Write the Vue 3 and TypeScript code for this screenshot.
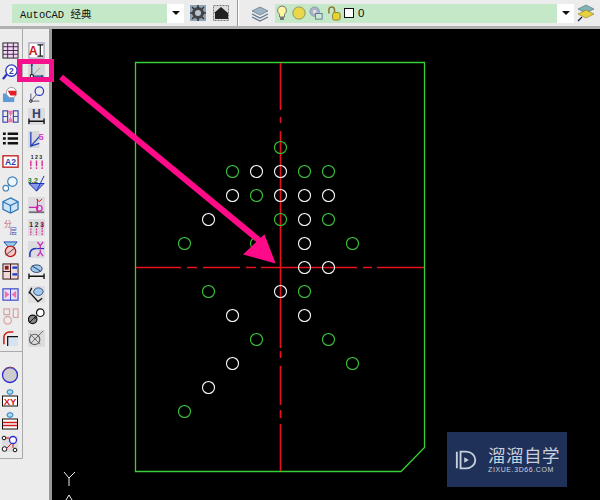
<script setup lang="ts">
type Hole = [number, number, number]
const rows: [number, [number, number][]][] = [
  [147, [[280, 1]]],
  [171, [[232, 1], [256, 0], [280, 0], [304, 1], [328, 1]]],
  [195, [[232, 0], [256, 1], [280, 0], [304, 0], [328, 0]]],
  [219, [[208, 0], [280, 1], [304, 0], [328, 1]]],
  [243, [[184, 1], [256, 1], [304, 0], [352, 1]]],
  [267, [[304, 0], [328, 0]]],
  [291, [[208, 1], [280, 0], [304, 1]]],
  [315, [[232, 0], [304, 0]]],
  [339, [[256, 1], [328, 1]]],
  [363, [[232, 0], [352, 1]]],
  [387, [[208, 0]]],
  [411, [[184, 1]]],
]
const holes: Hole[] = rows.flatMap(([y, items]) => items.map(([x, g]) => [x, y, g] as Hole))
</script>

<template>
  <div class="app">
    <header class="topbar">
      <div class="grip"></div>
      <div class="combo workspace">
        <span class="combo-value">AutoCAD 经典</span>
        <span class="combo-drop"><i class="caret"></i></span>
      </div>
      <svg class="tb" viewBox="0 0 18 18">
        <rect x="1" y="1" width="16" height="16" fill="#8fa4b8" />
        <circle cx="9" cy="9" r="6" fill="#444" />
        <circle cx="9" cy="9" r="3" fill="#b8c4d0" />
        <path d="M9 1v3M9 14v3M1 9h3M14 9h3M3 3l2 2M13 13l2 2M15 3l-2 2M5 13l-2 2" stroke="#333" stroke-width="1.5" />
      </svg>
      <svg class="tb" viewBox="0 0 18 18">
        <rect x="1.5" y="1.5" width="15" height="15" fill="#ddd" stroke="#777" stroke-dasharray="2 1" />
        <path d="M2 9 9 3l7 6v6H3V9z" fill="#222" />
      </svg>
      <div class="sep"></div>
      <svg class="tb layers" viewBox="0 0 20 18">
        <path d="M10 3 18 7l-8 4-8-4z" fill="#9db4c6" stroke="#5d7185" stroke-width=".7" />
        <path d="M2 10l8 4 8-4M2 13l8 4 8-4" fill="none" stroke="#62788c" stroke-width="1.3" />
      </svg>
      <div class="combo layer">
        <svg class="lamp" viewBox="0 0 12 16">
          <path d="M6 1a4.5 4.5 0 0 0-2.5 8.2V12h5V9.2A4.5 4.5 0 0 0 6 1z" fill="#fff6a0" stroke="#777" />
          <rect x="4" y="12" width="4" height="3" fill="#777" />
        </svg>
        <svg class="sun" viewBox="0 0 16 16"><circle cx="8" cy="8" r="7" fill="#e8d84a" stroke="#8a8a50" /></svg>
        <svg class="freeze" viewBox="0 0 16 16">
          <circle cx="6" cy="6" r="5" fill="#aab4c4" stroke="#8896aa" />
          <circle cx="6" cy="6" r="2" fill="#dde" />
          <rect x="7" y="8" width="7" height="6" fill="#cde8d0" stroke="#5a7a9a" />
        </svg>
        <svg class="lock" viewBox="0 0 16 16">
          <path d="M2 8V4a3 3 0 0 1 6 0v3" fill="none" stroke="#8a7a30" stroke-width="1.6" />
          <rect x="6" y="7" width="8" height="8" rx="2" fill="#e8d430" stroke="#8a7a30" />
        </svg>
        <i class="swatch"></i>
        <span class="layer-name">0</span>
        <span class="combo-drop"><i class="caret"></i></span>
      </div>
      <svg class="tb stack" viewBox="0 0 18 18">
        <path d="M9 1 17 5l-8 4-8-4z" fill="#7fb4b4" stroke="#567" stroke-width=".6" />
        <path d="M9 6l8 4-8 4-8-4z" fill="#e8d040" stroke="#897a20" stroke-width=".6" />
        <path d="M1 17l4-4" stroke="#124" stroke-width="1.3" />
      </svg>
      <div class="grip-end"></div>
    </header>

    <main class="workarea">
      <aside class="side">
        <section class="upper">
          <div class="col">
            <svg class="ic" viewBox="0 0 18 18">
              <rect x="1" y="1" width="16" height="16" fill="#f0d8f0" stroke="#222" />
              <path d="M1 5h16M1 9h16M1 13h16M6 1v16M12 1v16" stroke="#402050" />
            </svg>
            <svg class="ic" viewBox="0 0 18 18">
              <circle cx="10" cy="7" r="6" fill="#fff" stroke="#2233bb" stroke-width="1.4" />
              <text x="10" y="10.5" class="tx" font-size="9" fill="#3040b0">2</text>
              <path d="M5 11 1 16" stroke="#2233bb" stroke-width="2.4" />
            </svg>
            <svg class="ic" viewBox="0 0 18 18">
              <rect x="1" y="8" width="12" height="9" fill="#5c9bd8" />
              <circle cx="10" cy="7" r="5.5" fill="#fff" stroke="#999" />
              <path d="M6 5h9v5H9z" fill="#e81c24" />
            </svg>
            <svg class="ic" viewBox="0 0 18 18">
              <rect x="1" y="3" width="5" height="12" fill="none" stroke="#3344aa" stroke-width="1.2" />
              <path d="M1 9h5" stroke="#3344aa" />
              <rect x="12" y="3" width="5" height="12" fill="none" stroke="#3344aa" stroke-width="1.2" />
              <path d="M12 9h5" stroke="#3344aa" />
              <path d="M6 3h6L9 9l3 6H6l3-6z" fill="#f078b0" />
            </svg>
            <svg class="ic" viewBox="0 0 18 18">
              <path d="M1 3h3M1 8h3M1 13h3M6 3h11M6 8h11M6 13h11" stroke="#111" stroke-width="2.6" />
            </svg>
            <svg class="ic" viewBox="0 0 18 18">
              <rect x="1" y="3" width="16" height="12" fill="#fff" stroke="#c01818" stroke-width="1.4" />
              <text x="9" y="12.5" class="tx" font-size="9" fill="#2a3fa8">A2</text>
            </svg>
            <svg class="ic" viewBox="0 0 18 18">
              <circle cx="11" cy="7" r="5" fill="#eef4fa" stroke="#3f7fb8" stroke-width="1.2" />
              <circle cx="4" cy="14" r="3" fill="#fff" stroke="#3f7fb8" stroke-width="1.2" />
              <path d="M6.5 11.5 8 10" stroke="#3f7fb8" />
            </svg>
            <svg class="ic" viewBox="0 0 18 18">
              <path d="M9 1 17 5v8l-8 4-8-4V5z" fill="#cfe4f4" stroke="#2f78b8" stroke-width="1.4" />
              <path d="M1 5l8 4 8-4M9 9v8" fill="none" stroke="#2f78b8" stroke-width="1.4" />
            </svg>
            <svg class="ic" viewBox="0 0 18 18">
              <text x="6" y="8.500" class="tx cjk" font-size="8" fill="#c06080">分</text>
              <text x="12" y="16" class="tx cjk" font-size="8" fill="#3a55b0">层</text>
            </svg>
            <svg class="ic" viewBox="0 0 18 18">
              <path d="M2 1h14L9 9z" fill="#8fd0e8" stroke="#2040b0" />
              <circle cx="9" cy="11" r="5.5" fill="#f4c8c8" stroke="#c01818" stroke-width="1.4" />
              <path d="M4 15 14 7" stroke="#444" />
            </svg>
            <svg class="ic" viewBox="0 0 18 18">
              <rect x="1" y="1" width="16" height="16" fill="#eed8d8" stroke="#301010" />
              <path d="M9 1v16M1 9h8" stroke="#301010" />
              <path d="M11 5h5M11 12h5" stroke="#1040d0" stroke-width="2.4" />
              <rect x="3" y="3" width="4" height="4" fill="#901818" />
            </svg>
            <svg class="ic" viewBox="0 0 18 18">
              <rect x="1" y="3" width="16" height="12" fill="#e8e0f4" stroke="#3344cc" stroke-width="1.2" />
              <path d="M3 5l5 4-5 4zM15 5l-5 4 5 4z" fill="#f070b0" />
              <path d="M9 3v12" stroke="#3344cc" />
            </svg>
            <svg class="ic" viewBox="0 0 18 18">
              <rect x="2" y="1" width="6" height="6" fill="none" stroke="#d8a8a8" stroke-width="1.4" />
              <rect x="12" y="1" width="5" height="9" fill="none" stroke="#d8a8a8" stroke-width="1.4" />
              <circle cx="6" cy="13" r="4" fill="none" stroke="#d8a8a8" stroke-width="1.4" />
            </svg>
            <svg class="ic" viewBox="0 0 18 18">
              <path d="M2 15V8a6 6 0 0 1 6-6h4" fill="none" stroke="#d01818" stroke-width="1.6" />
              <rect x="6" y="7" width="11" height="10" fill="#d4e4f0" />
              <path d="M6 17V7h11" fill="none" stroke="#111" stroke-width="1.3" />
            </svg>
          </div>
          <div class="col second">
            <svg class="ic" viewBox="0 0 18 18">
              <rect x="1" y="1" width="16" height="16" fill="#fff" stroke="#88a" />
              <text x="5.5" y="14" class="tx" font-size="13" fill="#c81818">A</text>
              <path d="M10 3h6M13 3v12M10 15h6" stroke="#111" stroke-width="1.2" fill="none" />
            </svg>
            <svg class="ic selected" viewBox="0 0 18 18">
              <path d="M4 15V2M4 15H16" stroke="#184a88" stroke-width="1.3" />
              <path d="M2.500 4 4 1l1.500 3zM14 13.500l3 1.500-3 1.500z" fill="#184a88" />
              <path d="M4 15 13 6" stroke="#8aa" />
              <rect x="2.500" y="13.500" width="3" height="3" fill="#fff" stroke="#111" />
            </svg>
            <svg class="ic" viewBox="0 0 18 18">
              <circle cx="12" cy="5.500" r="4.500" fill="none" stroke="#2a35c8" stroke-width="1.3" />
              <path d="M3 16V8M3 16h9M3 16 9 9" stroke="#557" />
              <circle cx="3" cy="16" r="1.300" fill="#fff" stroke="#111" />
            </svg>
            <svg class="ic" viewBox="0 0 18 18">
              <rect x="0" y="0" width="18" height="18" fill="#dcdce0" />
              <text x="9" y="11" class="tx" font-size="13" font-weight="400" fill="#30406a">H</text>
              <path d="M1 11v6M17 11v6M1 14h16" stroke="#111" stroke-width="1.4" />
            </svg>
            <svg class="ic" viewBox="0 0 18 18">
              <rect x="0" y="0" width="12" height="18" fill="#d8d8dc" />
              <path d="M3 1v16M3 16 12 6M3 16l9-3" stroke="#2244bb" stroke-width="1.4" />
              <text x="14" y="10" class="tx" font-size="10" font-weight="400" fill="#d040c0">5</text>
            </svg>
            <svg class="ic" viewBox="0 0 18 18">
              <text x="9" y="6" class="tx" font-size="5.500" fill="#222">1 2 3</text>
              <path d="M3 8v9M9 8v9M15 8v9" stroke="#d83090" stroke-width="1.500" stroke-dasharray="6 1" />
            </svg>
            <svg class="ic" viewBox="0 0 18 18">
              <text x="5" y="8" class="tx" font-size="8" fill="#208040">3.2</text>
              <path d="M1 9h16L9 17z" fill="#8898e8" stroke="#1a2ab0" />
              <path d="M17 1 9 17" stroke="#1a2ab0" />
            </svg>
            <svg class="ic" viewBox="0 0 18 18">
              <rect x="0" y="0" width="18" height="18" fill="#dcdce0" />
              <path d="M10 2v14M1 11h10" stroke="#d020b0" stroke-width="1.200" />
              <path d="M1 16h16" stroke="#222" />
              <circle cx="12" cy="12" r="3" fill="none" stroke="#d020b0" stroke-width="1.300" />
              <path d="M9 2l3 3 3-3" fill="none" stroke="#e01818" />
            </svg>
            <svg class="ic" viewBox="0 0 18 18">
              <rect x="0" y="0" width="18" height="18" fill="#dcdce0" />
              <text x="9" y="8" class="tx" font-size="7" fill="#222">1 2 3</text>
              <path d="M3 10v7M9 10v7M15 3v14" stroke="#d83090" stroke-width="1.300" stroke-dasharray="2 1" />
            </svg>
            <svg class="ic" viewBox="0 0 18 18">
              <rect x="0" y="0" width="18" height="18" fill="#dcdce0" />
              <path d="M2 17V13Q3 8 9 8" fill="none" stroke="#2233bb" stroke-width="1.600" />
              <path d="M9 8h8" stroke="#2233bb" stroke-width="1.300" />
              <path d="M10 1l3 4 3-4M13 5v3M10 16l3-4 3 4M13 12V9" fill="none" stroke="#c828b8" stroke-width="1.300" />
            </svg>
            <svg class="ic" viewBox="0 0 18 18">
              <path d="M1 11v6M17 11v6M1 14h16" stroke="#111" stroke-width="1.400" />
              <ellipse cx="9" cy="6" rx="6" ry="4" fill="#a0c8e8" stroke="#203a6a" />
              <path d="M4 3 14 9" stroke="#203a6a" />
            </svg>
            <svg class="ic" viewBox="0 0 18 18">
              <rect x="0" y="0" width="18" height="18" fill="#e0e0e0" />
              <path d="M1 6 11 17M4 2 1 8M15 13l-5 4" stroke="#111" stroke-width="1.400" fill="none" />
              <ellipse cx="11" cy="6" rx="5" ry="4" fill="#a0c8e8" stroke="#2a4a8a" />
            </svg>
            <svg class="ic" viewBox="0 0 18 18">
              <circle cx="5" cy="12" r="4.500" fill="#888" stroke="#111" stroke-width="1.300" />
              <circle cx="13" cy="5" r="4" fill="#fff" stroke="#111" stroke-width="1.300" />
              <path d="M1 16 9 8M9 9l-2 3" stroke="#111" />
            </svg>
            <svg class="ic" viewBox="0 0 18 18">
              <rect x="0" y="0" width="18" height="18" fill="#dcdcdc" />
              <circle cx="7" cy="10" r="5.500" fill="none" stroke="#666" stroke-width="1.300" />
              <path d="M2 4 13 15M16 1 7 10M3 14 12 5" stroke="#666" />
            </svg>
          </div>
        </section>
        <section class="lower">
          <svg class="ic big" viewBox="0 0 18 18">
            <circle cx="9" cy="9" r="7.500" fill="#cdcdcd" stroke="#2a2ad0" stroke-width="1.300" />
            <path d="M3 4a8 8 0 0 1 12 0" fill="none" stroke="#d06010" stroke-dasharray="2 1" />
          </svg>
          <svg class="ic big" viewBox="0 0 18 18">
            <ellipse cx="9" cy="3" rx="3" ry="2.300" fill="#a8dcf0" stroke="#2a7ac0" />
            <rect x="1.500" y="7" width="15" height="10" fill="#fff" stroke="#111" />
            <text x="9" y="15.500" class="tx" font-size="9.500" fill="#d01818">XY</text>
          </svg>
          <svg class="ic big" viewBox="0 0 18 18">
            <ellipse cx="9" cy="3" rx="3" ry="2.300" fill="#a8dcf0" stroke="#2a7ac0" />
            <rect x="1.500" y="7" width="15" height="10" fill="#fff" stroke="#111" />
            <path d="M2 10.500h14M2 13.500h14" stroke="#d01818" stroke-width="1.400" />
          </svg>
          <svg class="ic big" viewBox="0 0 18 18">
            <rect x="1" y="1" width="16" height="16" fill="#dcdce0" />
            <circle cx="12" cy="5" r="3.500" fill="#fff" stroke="#2a2ad0" stroke-width="1.300" />
            <circle cx="3" cy="3" r="1.800" fill="#fff" stroke="#111" />
            <circle cx="3.500" cy="14" r="2.300" fill="#fff" stroke="#111" />
            <circle cx="14" cy="15" r="1.800" fill="#fff" stroke="#111" />
            <path d="M5 3h3M5 14l6-6M12 9v4" stroke="#d01818" />
          </svg>
        </section>
      </aside>

      <div class="canvas">
        <svg class="drawing" viewBox="52 29 548 471">
          <path d="M135.500 62.500H424.500V447.500L401 471.500H135.500Z" fill="none" stroke="#38d038" stroke-width="1.300" />
          <path class="center-line" d="M280.500 63V110M280.500 117V123M280.500 131V348M280.500 351V358M280.500 366V405M280.500 410V418M280.500 424V471" />
          <path class="center-line" d="M136 267.500H181M187 267.500H197M203 267.500H240M246 267.500H256M261 267.500H357M363 267.500H372M377 267.500H424" />
          <circle
            v-for="h in holes"
            :key="`${h[0]}-${h[1]}`"
            :cx="h[0] + 0.5"
            :cy="h[1] + 0.500"
            r="6"
            fill="none"
            stroke-width="1.100"
            :stroke="h[2] ? '#38c838' : '#fff'"
          />
          <path d="M61 77 266 246" stroke="#ff0a88" stroke-width="6" />
          <path d="M274 262 245 254 264 236Z" fill="#ff0a88" stroke="#ff0a88" stroke-width="2" />
          <path d="M64 472 69 478 75 472M69 478V486M66 500 69 495 72 500" fill="none" stroke="#eee" />
        </svg>
        <div class="mark">
          <svg class="mark-logo" viewBox="0 0 26 26">
            <path d="M2 4V22M6 4h6a10 9 0 0 1 0 18H6Z" fill="none" stroke="#c8d0de" stroke-width="2" />
            <path d="M10 10v6l5-3z" fill="#c8d0de" />
          </svg>
          <div class="mark-text">
            <span class="mark-name">溜溜自学</span>
            <span class="mark-url">ZIXUE.3D66.COM</span>
          </div>
        </div>
      </div>
      <div class="highlight"></div>
    </main>
  </div>
</template>

<style>
html, body { margin: 0; background: #ececec; }
</style>

<style scoped>
.app {
  width: 600px;
  height: 500px;
  overflow: hidden;
  display: flex;
  flex-direction: column;
  background: #ececec;
  font-family: "Liberation Mono", "Noto Sans CJK SC", monospace;
}
.topbar {
  height: 26px;
  flex: none;
  display: flex;
  align-items: center;
  background: #ececec;
  border-bottom: 3px solid #b0b0b0;
}
.grip { width: 12px; flex: none; }
.combo {
  display: flex;
  align-items: center;
  height: 19px;
  background: #c5e8c8;
  color: #111;
}
.workspace { width: 172px; flex: none; margin-right: 3px; }
.combo-value { flex: 1; padding-left: 8px; font-size: 10.500px; white-space: nowrap; }
.combo-drop {
  width: 17px;
  align-self: stretch;
  flex: none;
  display: flex;
  align-items: center;
  justify-content: center;
  background: #fff;
}
.caret {
  width: 0;
  height: 0;
  border-left: 4px solid transparent;
  border-right: 4px solid transparent;
  border-top: 4px solid #111;
}
.tb { width: 18px; height: 18px; flex: none; margin: 0 3px 0 2px; }
.sep { width: 1px; height: 26px; background: #999; flex: none; margin: 0 9px 0 4px; border-right: 1px solid #fff; }
.layers { width: 20px; margin-right: 5px; }
.layer { flex: none; width: 299px; }
.lamp { width: 12px; height: 16px; margin-left: 1px; }
.sun { width: 14px; height: 14px; margin-left: 4px; }
.freeze { width: 15px; height: 15px; margin-left: 3px; }
.lock { width: 15px; height: 15px; margin-left: 3px; }
.swatch {
  width: 8px;
  height: 8px;
  margin-left: 2px;
  background: #fff;
  border: 1px solid #111;
  flex: none;
}
.layer-name {
  flex: 1;
  margin-left: 4px;
  font-family: "Liberation Sans", sans-serif;
  font-size: 11.500px;
}
.stack { margin: 0 0 0 3px; }
.grip-end { width: 3px; }
.workarea { position: relative; flex: 1; display: flex; min-height: 0; }
.side { width: 49px; flex: none; display: flex; flex-direction: column; border-right: 3px solid #999; }
.upper { display: flex; height: 323px; flex: none; }
.col {
  width: 23px;
  flex: none;
  box-sizing: border-box;
  display: flex;
  flex-direction: column;
  gap: 5.150px;
  align-items: center;
  border-right: 1px solid #aaa;
  border-bottom: 1px solid #aaa;
  padding: 13px 2px 0 0;
  height: 323px;
}
.second { width: 26px; border: none; padding-right: 0; }
.ic { width: 17px; height: 17px; flex: none; }
.selected { background: #d8d8d8; margin-top: -2px; margin-bottom: 2px; }
.big { width: 18px; height: 18px; }
.lower {
  box-sizing: border-box;
  width: 23px;
  height: 107px;
  padding: 14px 2px 0 0;
  display: flex;
  flex-direction: column;
  align-items: center;
  gap: 5px;
  border-right: 1px solid #aaa;
  border-bottom: 1px solid #aaa;
}
.tx { font-family: "Liberation Sans", sans-serif; font-weight: 700; text-anchor: middle; }
.cjk { font-family: "Noto Sans CJK SC", sans-serif; font-weight: 400; }
.canvas { position: relative; flex: 1; background: #000; min-width: 0; }
.drawing { display: block; width: 548px; height: 471px; }
.center-line { fill: none; stroke: #e8121f; stroke-width: 1.600; }
.highlight {
  position: absolute;
  left: 17px;
  top: 30px;
  width: 27px;
  height: 13px;
  border: 5px solid #f5108c;
  box-sizing: content-box;
  pointer-events: none;
}
.mark {
  position: absolute;
  left: 395px;
  top: 403px;
  width: 120px;
  height: 55px;
  display: flex;
  align-items: center;
  gap: 9px;
  padding-left: 8px;
  box-sizing: border-box;
  background: #1f3159;
  color: #c8d0de;
}
.mark-logo { width: 24px; height: 24px; flex: none; }
.mark-text { display: flex; flex-direction: column; gap: 1px; }
.mark-name {
  font-family: "Noto Sans CJK SC", sans-serif;
  font-size: 17.500px;
  line-height: 19px;
  letter-spacing: .5px;
  white-space: nowrap;
}
.mark-url {
  font-family: "Liberation Sans", sans-serif;
  font-size: 7px;
  line-height: 9px;
  letter-spacing: .6px;
  white-space: nowrap;
}
</style>
